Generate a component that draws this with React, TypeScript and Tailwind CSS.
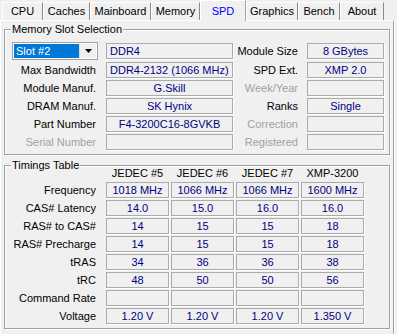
import React from "react";

const TABS = [
  { label: "CPU", w: "w-[41px]" },
  { label: "Caches", w: "w-[47px]" },
  { label: "Mainboard", w: "w-[61px]" },
  { label: "Memory", w: "w-[49px]" },
  { label: "SPD", w: "w-[46px]", active: true },
  { label: "Graphics", w: "w-[52px]" },
  { label: "Bench", w: "w-[42px]" },
  { label: "About", w: "w-[44px]" },
];

const SLOT_ROWS = [
  { left: "Max Bandwidth", val: "DDR4-2132 (1066 MHz)", alignLeft: true, right: "SPD Ext.", rval: "XMP 2.0" },
  { left: "Module Manuf.", val: "G.Skill", right: "Week/Year", rDim: true, rval: "" },
  { left: "DRAM Manuf.", val: "SK Hynix", right: "Ranks", rval: "Single" },
  { left: "Part Number", val: "F4-3200C16-8GVKB", right: "Correction", rDim: true, rval: "" },
  { left: "Serial Number", dim: true, val: "", right: "Registered", rDim: true, rval: "" },
];

const COLS = ["JEDEC #5", "JEDEC #6", "JEDEC #7", "XMP-3200"];
const TIMINGS: [string, string[]][] = [
  ["Frequency", ["1018 MHz", "1066 MHz", "1066 MHz", "1600 MHz"]],
  ["CAS# Latency", ["14.0", "15.0", "16.0", "16.0"]],
  ["RAS# to CAS#", ["14", "15", "15", "18"]],
  ["RAS# Precharge", ["14", "15", "15", "18"]],
  ["tRAS", ["34", "36", "36", "38"]],
  ["tRC", ["48", "50", "50", "56"]],
  ["Command Rate", ["", "", "", ""]],
  ["Voltage", ["1.20 V", "1.20 V", "1.20 V", "1.350 V"]],
];

// sunken read-only field
function Field({ w, children, left }: { w: string; children?: React.ReactNode; left?: boolean }) {
  return (
    <div
      className={`${w} h-[16px] border border-[#ababab] shadow-[1px_1px_0_#fff] leading-[14px] text-[#000080] whitespace-nowrap overflow-hidden ${
        left ? "pl-[3px] text-left" : "text-center"
      }`}
    >
      {children}
    </div>
  );
}

function GroupBox({ title, h, className, children }: { title: string; h: string; className?: string; children: React.ReactNode }) {
  return (
    <div
      className={`relative ml-[3px] w-[386px] ${h} border border-[#a0a0a0] shadow-[inset_1px_1px_0_#fff,1px_1px_0_#fff] ${className ?? ""}`}
    >
      <span className="absolute -top-[7px] left-[6px] px-[1px] bg-[#f0f0f0] leading-[12px] text-black">{title}</span>
      {children}
    </div>
  );
}

function Label({ children, dim }: { children: React.ReactNode; dim?: boolean }) {
  return (
    <div className={`w-[94px] pr-[3px] text-right whitespace-nowrap leading-[16px] ${dim ? "text-[#a0a0a0]" : "text-black"}`}>
      {children}
    </div>
  );
}

export default function App() {
  return (
    <div className="w-[397px] h-[334px] overflow-hidden bg-[#f0f0f0] text-[11px] font-['Liberation_Sans',Arial,sans-serif] select-none">
      {/* Tabs */}
      <div className="h-[20px] flex items-end pl-[2px]">
        {TABS.map((t) =>
          t.active ? (
            <div
              key={t.label}
              className={`${t.w} relative z-10 h-[21px] -mb-px bg-[#f0f0f0] border-t border-l border-white border-r border-r-[#a0a0a0] flex items-center justify-center text-[#0000ff]`}
            >
              {t.label}
            </div>
          ) : (
            <div
              key={t.label}
              className={`${t.w} h-[18px] bg-[#f0f0f0] border-t border-l border-white border-r border-r-[#8a8a8a] flex items-center justify-center text-black`}
            >
              {t.label}
            </div>
          )
        )}
      </div>

      {/* Panel */}
      <div className="w-[394px] h-[320px] border-t border-l border-white border-r border-r-[#a0a0a0] shadow-[1px_0_0_#fff] pt-[8px]">
        <GroupBox title="Memory Slot Selection" h="h-[126px]">
          <div className="pt-[12px] flex flex-col gap-[2px]">
            <div className="h-[18px] flex items-center">
              <div className="w-[94px] pl-[7px]">
                <div className="w-[86px] h-[18px] border border-[#a0a0a0] bg-white flex p-[1px]">
                  <div className="flex-1 bg-[#0078d7] text-white leading-[14px] pl-[2px]">Slot #2</div>
                  <div className="w-[17px] bg-[#f0f0f0] border-l border-[#dcdcdc] flex items-center justify-center">
                    <svg width="7" height="4" viewBox="0 0 7 4">
                      <path d="M0 0h7L3.5 4z" fill="#000" />
                    </svg>
                  </div>
                </div>
              </div>
              <div className="ml-[7px]">
                <Field w="w-[127px]" left>
                  DDR4
                </Field>
              </div>
              <div className="w-[65px] text-right leading-[16px]">Module Size</div>
              <div className="ml-[9px]">
                <Field w="w-[77px]">8 GBytes</Field>
              </div>
            </div>
            {SLOT_ROWS.map((r) => (
              <div key={r.left} className="h-[16px] flex items-center">
                <Label dim={r.dim}>{r.left}</Label>
                <div className="ml-[7px]">
                  <Field w="w-[127px]" left={r.alignLeft}>
                    {r.val}
                  </Field>
                </div>
                <div className={`w-[65px] text-right leading-[16px] ${r.rDim ? "text-[#a0a0a0]" : "text-black"}`}>{r.right}</div>
                <div className="ml-[9px]">
                  <Field w="w-[77px]">{r.rval}</Field>
                </div>
              </div>
            ))}
          </div>
        </GroupBox>

        <GroupBox title="Timings Table" h="h-[164px]" className="mt-[10px]">
          <div className="flex flex-col gap-[2px]">
            <div className="h-[14px] flex items-center">
              <div className="w-[94px]" />
              <div className="ml-[7px] flex gap-[2px]">
                {COLS.map((c) => (
                  <div key={c} className="w-[63px] text-center leading-[14px] whitespace-nowrap">
                    {c}
                  </div>
                ))}
              </div>
            </div>
            {TIMINGS.map(([label, vals]) => (
              <div key={label} className="h-[16px] flex items-center">
                <Label>{label}</Label>
                <div className="ml-[7px] flex gap-[2px]">
                  {vals.map((v, i) => (
                    <Field key={i} w="w-[63px]">
                      {v}
                    </Field>
                  ))}
                </div>
              </div>
            ))}
          </div>
        </GroupBox>
      </div>
    </div>
  );
}
